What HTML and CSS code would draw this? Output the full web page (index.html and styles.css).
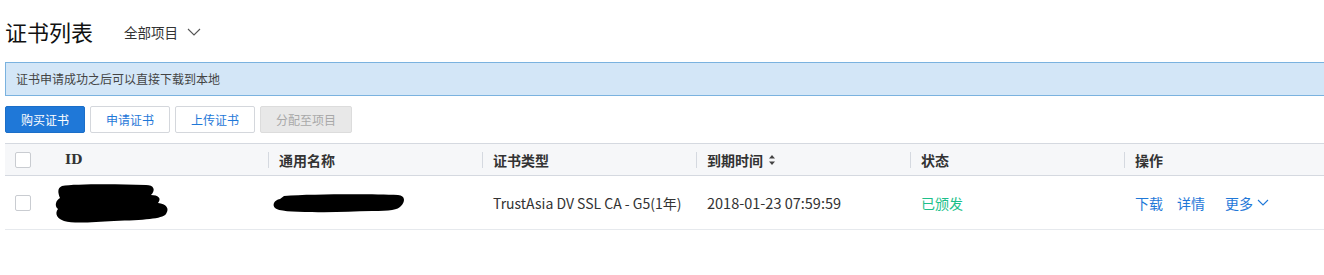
FILE: index.html
```html
<!DOCTYPE html>
<html lang="zh-CN">
<head>
<meta charset="utf-8">
<title>证书列表</title>
<link rel="stylesheet" href="styles.css">
</head>
<body>
<div class="page">
  <div class="head">
    <h1 class="title">证书列表</h1>
    <div class="project">全部项目
      <svg class="chev" width="14" height="8" viewBox="0 0 14 8"><path d="M1 1 L7 7 L13 1" fill="none" stroke="#555" stroke-width="1.1"/></svg>
    </div>
  </div>
  <div class="alert">证书申请成功之后可以直接下载到本地</div>
  <div class="toolbar">
    <button class="btn primary">购买证书</button>
    <button class="btn">申请证书</button>
    <button class="btn">上传证书</button>
    <button class="btn disabled">分配至项目</button>
  </div>
  <div class="table-wrap">
    <table class="table">
      <colgroup>
        <col class="c-check"><col class="c-col"><col class="c-col"><col class="c-col"><col class="c-col"><col class="c-col"><col class="c-col">
      </colgroup>
      <thead>
        <tr>
          <th class="chk"><span class="box"></span></th>
          <th class="serif"><span class="th-in">ID</span></th>
          <th><span class="th-in sep">通用名称</span></th>
          <th><span class="th-in sep">证书类型</span></th>
          <th><span class="th-in sep">到期时间
            <svg class="sort" width="8" height="12" viewBox="0 0 8 12"><path d="M4 1 L7 4.5 H1 Z M4 11 L7 7.5 H1 Z" fill="#444"/></svg></span></th>
          <th><span class="th-in sep">状态</span></th>
          <th><span class="th-in sep">操作</span></th>
        </tr>
      </thead>
      <tbody>
        <tr>
          <td class="chk"><span class="box"></span></td>
          <td class="redact-cell">
            <svg class="redact" width="116" height="40" viewBox="0 0 116 40"><path d="M8 2 C20 0 60 0 92 1 C100 1 102 6 97 11 C104 11 108 14 104 19 C112 20 116 24 112 30 C108 35 90 36 60 37 C40 38 20 40 10 37 C4 35 0 30 4 25 C0 22 2 16 6 14 C4 9 3 4 8 2 Z" fill="#000"/></svg>
          </td>
          <td class="redact-cell">
            <svg class="redact2" width="134" height="20" viewBox="0 0 134 20"><path d="M12 2 C40 0 100 0 126 1 C134 2 133 8 129 12 C126 16 118 17 100 17 C80 17 60 19 40 18 C20 18 6 17 3 14 C0 11 2 6 8 5 Z" fill="#000"/></svg>
          </td>
          <td>TrustAsia DV SSL CA - G5(1年)</td>
          <td class="date">2018-01-23 07:59:59</td>
          <td class="ok">已颁发</td>
          <td class="ops"><a class="link dl">下载</a><a class="link det">详情</a><a class="link more">更多<svg class="chev2" width="12" height="7" viewBox="0 0 12 7"><path d="M1 1 L6 6 L11 1" fill="none" stroke="#1f78d8" stroke-width="1.1"/></svg></a></td>
        </tr>
      </tbody>
    </table>
  </div>
</div>
</body>
</html>
```
FILE: styles.css
```css
html, body { margin: 0; padding: 0; background: #fff; overflow: hidden; }
body { font-family: "Noto Sans CJK SC", "Noto Sans", sans-serif; color: #333; }
.page { padding: 0 0 0 5px; }
.head { display: flex; align-items: center; height: 62px; }
.title { margin: 0; font-size: 22px; font-weight: 400; color: #111; line-height: 1; }
.project { display: flex; align-items: center; margin-left: 31px; font-size: 13.5px; color: #333; padding-top: 2px; }
.chev { margin-left: 9px; }
.alert { height: 34px; box-sizing: border-box; border: 1px solid #7ab2df; border-right: none; background: #d3e6f7;
  font-size: 12px; color: #444; line-height: 32px; padding-left: 10px; width: calc(100% + 10px); }
.toolbar { display: flex; gap: 5px; margin-top: 10px; }
.btn { height: 27px; width: 80px; box-sizing: border-box; border: 1px solid #d4d7dc; background: #fff; color: #1f78d8;
  font-family: "Noto Sans CJK SC", sans-serif; font-size: 12px; border-radius: 2px; padding: 0; }
.btn.primary { background: #1f78d8; border-color: #1b6ec8; color: #fff; }
.btn.disabled { width: 92px; background: #e8e8e8; border-color: #dcdcdc; color: #a8a8a8; }
.table-wrap { margin-top: 10px; width: 1340px; }
.table { border-collapse: collapse; table-layout: fixed; width: 1333px; }
.c-check { width: 49px; }
.c-col { width: 214px; }
th { height: 31px; background: #f6f7f9; border-top: 1px solid #d5d9e0; border-bottom: 1px solid #d5d9e0; text-align: left;
  font-size: 14px; font-weight: 700; color: #333; padding: 0; }
.th-in { display: flex; align-items: center; height: 16px; padding-left: 10px; }
.th-in.sep { border-left: 1px solid #d5d9e0; }
th.serif { font-family: "DejaVu Serif", serif; font-size: 13px; }
th.serif .th-in { padding-left: 11px; }
.sort { margin-left: 5px; }
td { height: 53px; border-bottom: 1px solid #e6e9ed; padding: 0 0 0 11px; font-size: 14px; color: #333; }
td.date { font-size: 14.5px; }
.chk { padding: 0 0 0 10px; }
th.chk .box, td.chk .box { display: block; width: 14px; height: 14px; border: 1px solid #c9ccd1; border-radius: 2px; background: #fff; }
.redact-cell { padding-left: 0; }
.redact { display: block; margin-top: 2px; }
.redact2 { display: block; margin-left: 4px; margin-top: 2px; }
.ok { color: #1dbf8a; }
.ops { white-space: nowrap; }
.link { color: #1f78d8; }
.link.dl { margin-right: 14px; }
.link.det { margin-right: 20px; }
.link.more { display: inline-flex; align-items: center; }
.chev2 { margin-left: 4px; }
```
